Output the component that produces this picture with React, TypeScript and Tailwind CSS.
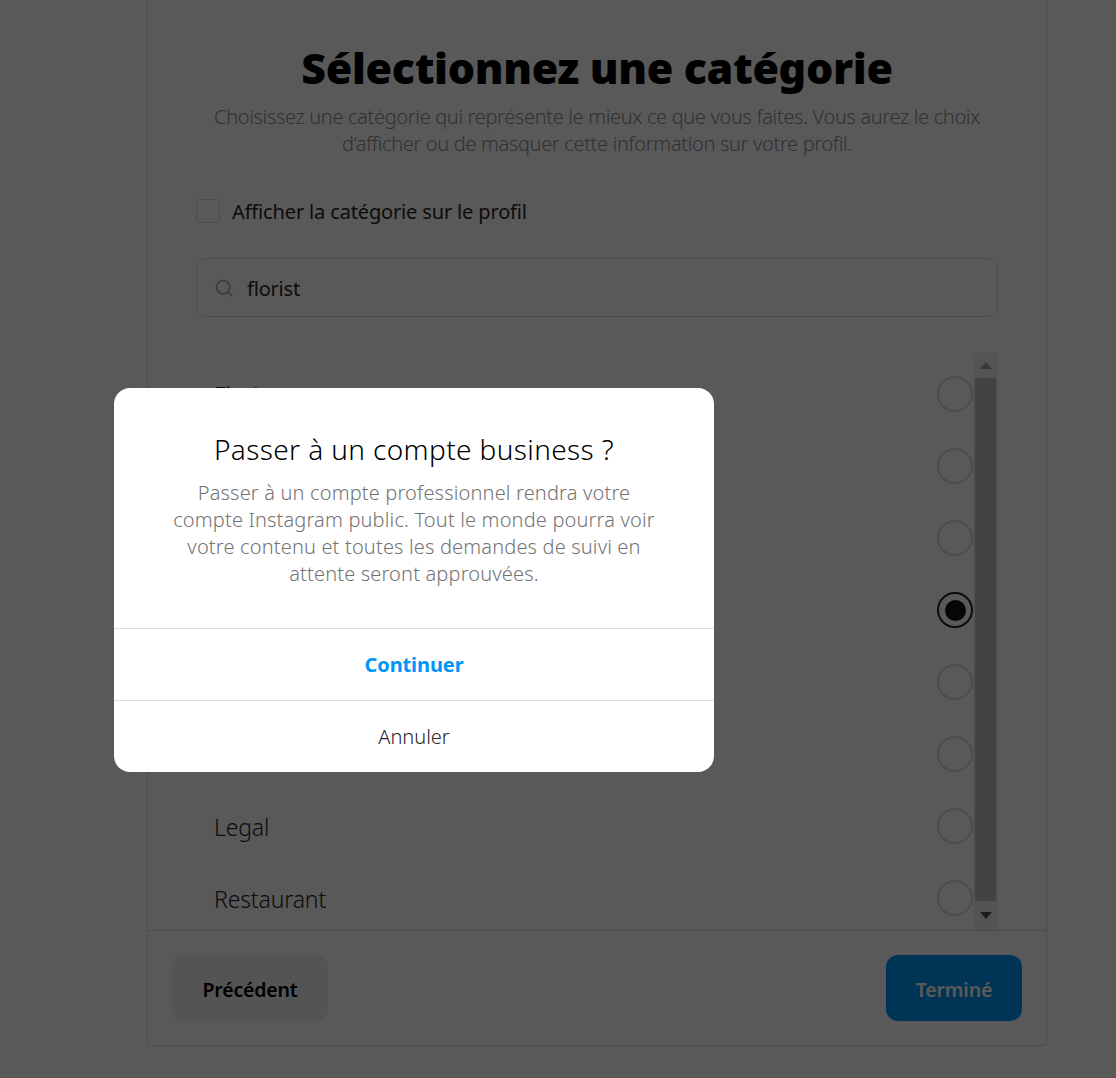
import { Search } from "lucide-react";

const rows = ["Florist", "", "", "", "", "", "Legal", "Restaurant"];

export default function App() {
  return (
    <div className="relative h-[1078px] w-[1116px] overflow-hidden bg-white font-['Noto_Sans',sans-serif] text-[#262626]">
      <div className="ml-[147px] flex h-[1046px] w-[900px] flex-col rounded-b-[3px] border-x border-b border-[#dbdbdb] bg-white">
        <div className="flex-1 px-12">
          <h1 className="mt-[38px] text-center text-[43px] leading-[60px] font-black tracking-[-0.35px] text-black">
            Sélectionnez une catégorie
          </h1>
          <p className="mt-[5px] text-center text-[20px] leading-[27px] font-light tracking-[-0.34px] text-[#8e8e8e]">
            Choisissez une catégorie qui représente le mieux ce que vous faites. Vous aurez le choix
            <br />
            d’afficher ou de masquer cette information sur votre profil.
          </p>
          <div className="mt-[39px] flex items-center gap-3">
            <div className="h-6 w-6 rounded-[3px] border border-[#dbdbdb]" />
            <span className="mt-[2px] text-[20px] leading-[27px] tracking-[-0.15px]">Afficher la catégorie sur le profil</span>
          </div>
          <div className="mt-[33px] flex h-[59px] items-center rounded-[10px] border border-[#dbdbdb] pl-[17px]">
            <Search className="h-5 w-5 text-[#a8a8a8]" strokeWidth={2} />
            <span className="mt-[2px] ml-[13px] text-[20px] leading-[27px] tracking-[-0.2px]">florist</span>
          </div>
          <div className="mt-[36px] flex h-[577px]">
            <div className="flex-1 pt-[5px]">
              {rows.map((r, i) => (
                <div key={i} className="flex h-[72px] items-center justify-between pl-[18px]">
                  <span className="mt-[2px] text-[23px] font-light tracking-[-0.15px]">{r}</span>
                  {i === 3 ? (
                    <span className="flex h-9 w-9 items-center justify-center rounded-full border-[2px] border-[#262626] bg-white">
                      <span className="h-[21px] w-[21px] rounded-full bg-[#121212]" />
                    </span>
                  ) : (
                    <span className="h-9 w-9 rounded-full border-[2px] border-[#dbdbdb]" />
                  )}
                </div>
              ))}
            </div>
            <div className="flex w-[25px] flex-col bg-[#f1f1f1]">
              <div className="flex h-[25px] items-center justify-center">
                <svg width="12" height="7" viewBox="0 0 12 7"><path d="M6 0 L12 7 H0 Z" fill="#a3a3a3" /></svg>
              </div>
              <div className="mx-[2px] h-[523px] bg-[#c1c1c1]" />
              <div className="flex flex-1 items-center justify-center">
                <svg width="12" height="7" viewBox="0 0 12 7"><path d="M0 0 H12 L6 7 Z" fill="#505050" /></svg>
              </div>
            </div>
          </div>
        </div>
        <div className="flex h-[115px] items-center justify-between border-t border-[#dbdbdb] px-6">
          <button className="h-[66px] w-[156px] rounded-xl bg-[#efefef] pt-[3px] text-[19.5px] font-semibold tracking-[-0.2px] text-black">
            Précédent
          </button>
          <button className="h-[66px] w-[136px] rounded-xl bg-[#0095f6] pt-[3px] text-[19.5px] font-semibold tracking-[-0.2px] text-white">
            Terminé
          </button>
        </div>
      </div>

      <div className="absolute inset-0 bg-black/65">
        <div className="absolute top-[388px] left-[114px] w-[600px] overflow-hidden rounded-2xl bg-white">
          <div className="px-[40px] pt-[43px] pb-[41px] text-center">
            <h2 className="text-[28px] leading-[36px] font-light tracking-[0.38px] text-black">Passer à un compte business ?</h2>
            <p className="mt-[12px] text-[20px] leading-[27px] font-[350] tracking-[0.16px] text-[#737373]">
              Passer à un compte professionnel rendra votre
              <br />
              compte Instagram public. Tout le monde pourra voir
              <br />
              votre contenu et toutes les demandes de suivi en
              <br />
              attente seront approuvées.
            </p>
          </div>
          <button className="block h-[72px] w-full border-t border-[#dbdbdb] text-[20px] font-bold tracking-[-0.1px] text-[#0095f6]">
            Continuer
          </button>
          <button className="block h-[72px] w-full border-t border-[#dbdbdb] text-[20px] font-[350] text-[#262626]">
            Annuler
          </button>
        </div>
      </div>
    </div>
  );
}
